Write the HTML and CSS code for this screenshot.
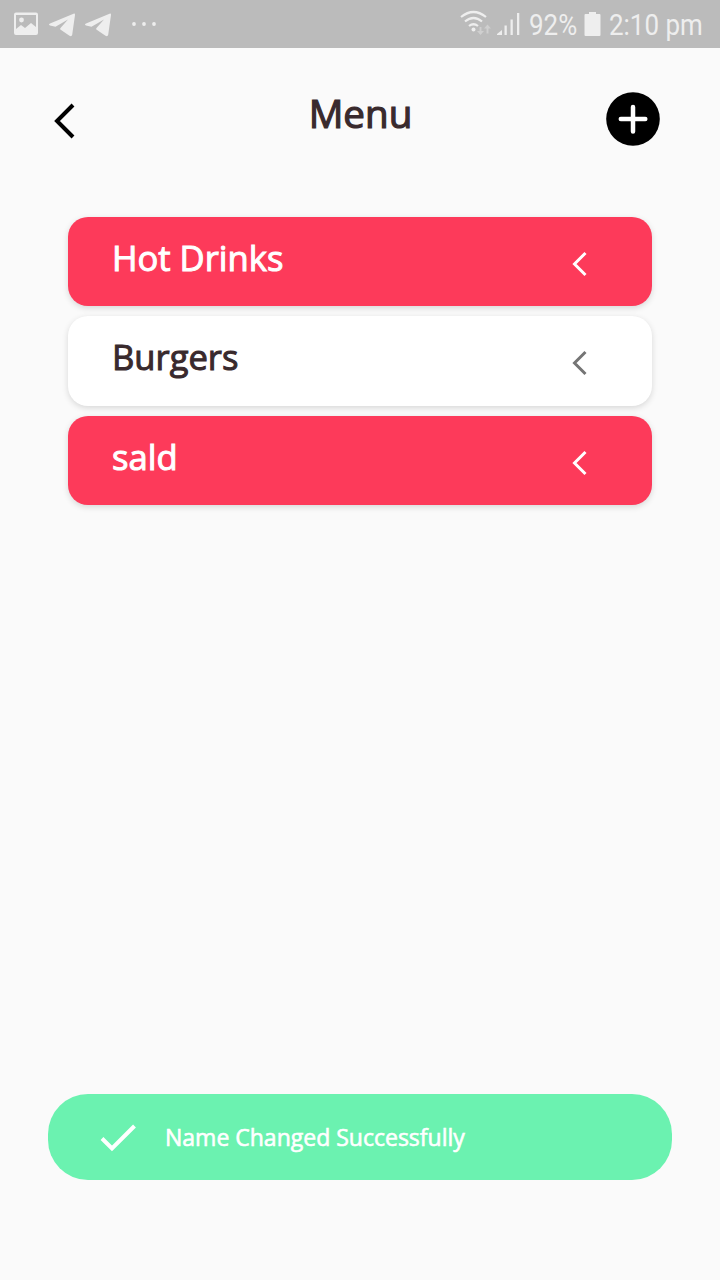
FILE: index.html
```
<!DOCTYPE html>
<html lang="en">

<head>
    <meta charset="UTF-8">
    <meta name="viewport" content="width=device-width, initial-scale=1.0">
    <title>Menu</title>
    <link rel="stylesheet" href="styles.css">
</head>

<body>
    <div class="status-bar">
        <svg class="notifications" width="170" height="48" viewBox="0 0 170 48">
            <path fill-rule="evenodd" d="M16 12.500h20a2 2 0 0 1 2 2v18.500a2 2 0 0 1-2 2H16a2 2 0 0 1-2-2V14.500a2 2 0 0 1 2-2zM16 15v14l5-4 4 3 6-5 5 4V15z" />
            <circle cx="21.500" cy="20" r="2.400" />
            <path id="plane" d="M73.500 13.700 50 23.500q-2 1.200 0 2l5.500 1.300 12.500-7.300-7.500 8.500q-1 1 .2 1.800l8.800 6q2.200 1 2.700-1L75 15q.2-1.800-1.500-1.300z" />
            <use href="#plane" x="36" />
            <circle cx="134" cy="24" r="1.900" />
            <circle cx="144" cy="24" r="1.900" />
            <circle cx="154" cy="24" r="1.900" />
        </svg>
        <svg class="signals" width="64" height="48" viewBox="0 0 64 48">
            <g fill="none" stroke="#eee" stroke-width="2.200">
                <path d="M1 17q12.500-10 25 0" />
                <path d="M5 21.500q8.500-7 17 0" />
                <path d="M9 26q4.500-3.500 9 0" />
            </g>
            <circle cx="13.500" cy="29.500" r="2" />
            <path opacity=".4" d="M19.500 27h2v4h2.500l-3.500 4-3.500-4h2.500zM26.500 33.500h2v-5h2.500l-3.500-4-3.500 4h2.500z" />
            <path d="M37 35v-1l5-4v5zM44.500 25.500h2.300V35h-2.300zM50.500 19.500h2.300V35h-2.300zM57 13h2.300v22H57z" />
        </svg>
        <span class="percent"><span>92%</span></span>
        <svg class="battery" width="17" height="48" viewBox="0 0 17 48">
            <path d="M5 12h7v2h3.500q1 0 1 1v20q0 1-1 1h-14q-1 0-1-1V15q0-1 1-1H5z" />
        </svg>
        <span class="time"><span>2:10 pm</span></span>
    </div>

    <header class="header">
        <svg class="back" width="24" height="36" viewBox="0 0 24 36">
            <path d="M20 2 4 18l16 16" />
        </svg>
        <h1>Menu</h1>
        <svg class="add" width="54" height="54" viewBox="0 0 54 54">
            <circle cx="27" cy="27" r="26.800" />
            <path d="M27 15v24.500M14.800 27h24.500" />
        </svg>
    </header>

    <main class="list">
        <div class="item red">
            <span>Hot Drinks</span>
            <svg class="arrow" width="18" height="26" viewBox="0 0 18 26">
                <path d="M15.500 2 4.500 13l11 11" />
            </svg>
        </div>
        <div class="item">
            <span>Burgers</span>
            <svg class="arrow" width="18" height="26" viewBox="0 0 18 26">
                <path d="M15.500 2 4.500 13l11 11" />
            </svg>
        </div>
        <div class="item red">
            <span>sald</span>
            <svg class="arrow" width="18" height="26" viewBox="0 0 18 26">
                <path d="M15.500 2 4.500 13l11 11" />
            </svg>
        </div>
    </main>

    <div class="toast">
        <svg class="check" width="38" height="30" viewBox="0 0 38 30">
            <path d="M3 15.500 13 25.500 35.500 3" />
        </svg>
        <span>Name Changed Successfully</span>
    </div>
</body>

</html>
```

FILE: styles.css
```
* {
    box-sizing: border-box;
}

body {
    margin: 0;
    height: 1280px;
    display: flex;
    flex-direction: column;
    background-color: #fafafa;
    color: #392a2d;
    font-family: "Open Sans", sans-serif;
    overflow: hidden;
}

svg {
    display: block;
    flex-shrink: 0;
}

.status-bar {
    height: 48px;
    display: flex;
    background-color: #bbb;
    color: #eee;
    fill: #eee;
    font-family: Roboto, sans-serif;
    font-size: 30px;
    line-height: 50px;
    white-space: nowrap;
}

.signals {
    margin-left: auto;
}

.percent {
    width: 56px;
    padding-left: 5px;
}

.time {
    width: 119px;
    padding-left: 8px;
}

.percent span,
.time span {
    display: inline-block;
    transform: scaleX(0.865);
    transform-origin: left;
}

.battery {
    margin-left: 4px;
}

.header {
    display: flex;
    justify-content: space-between;
    padding: 38px 60px 0 53px;
    height: 169px;
}

h1 {
    margin: 0 0 0 38px;
    font-size: 38.6px;
    font-weight: 400;
    line-height: 55px;
    -webkit-text-stroke: 1.2px;
}

.back {
    margin-top: 17px;
    fill: none;
    stroke: #000;
    stroke-width: 4;
}

.add {
    margin-top: 6px;
}

.add path {
    stroke: #fff;
    stroke-width: 4.5;
    stroke-linecap: round;
}

.list {
    display: flex;
    flex-direction: column;
    gap: 10px;
    padding: 0 68px;
}

.item {
    height: 89.3px;
    display: flex;
    justify-content: space-between;
    align-items: center;
    padding: 0 64px 0 44px;
    border-radius: 20px;
    background-color: #fff;
    box-shadow: 0 2px 6px rgba(0, 0, 0, 0.14);
    font-size: 34.6px;
    -webkit-text-stroke: 1px;
}

.item span {
    padding-bottom: 8px;
}

.red {
    background-color: #fd3a5a;
    color: #fff;
}

.arrow {
    margin-top: 5px;
    fill: none;
    stroke: #757575;
    stroke-width: 3;
}

.red .arrow {
    stroke: #fff;
}

.toast {
    display: flex;
    align-items: center;
    gap: 28px;
    height: 86px;
    margin: auto 48px 100px;
    padding-left: 51px;
    border-radius: 40px;
    background-color: #6bf2b0;
    color: #fff;
    font-size: 23px;
    -webkit-text-stroke: 0.6px;
}

.check {
    margin-top: 1px;
    fill: none;
    stroke: #fff;
    stroke-width: 4;
}
```
